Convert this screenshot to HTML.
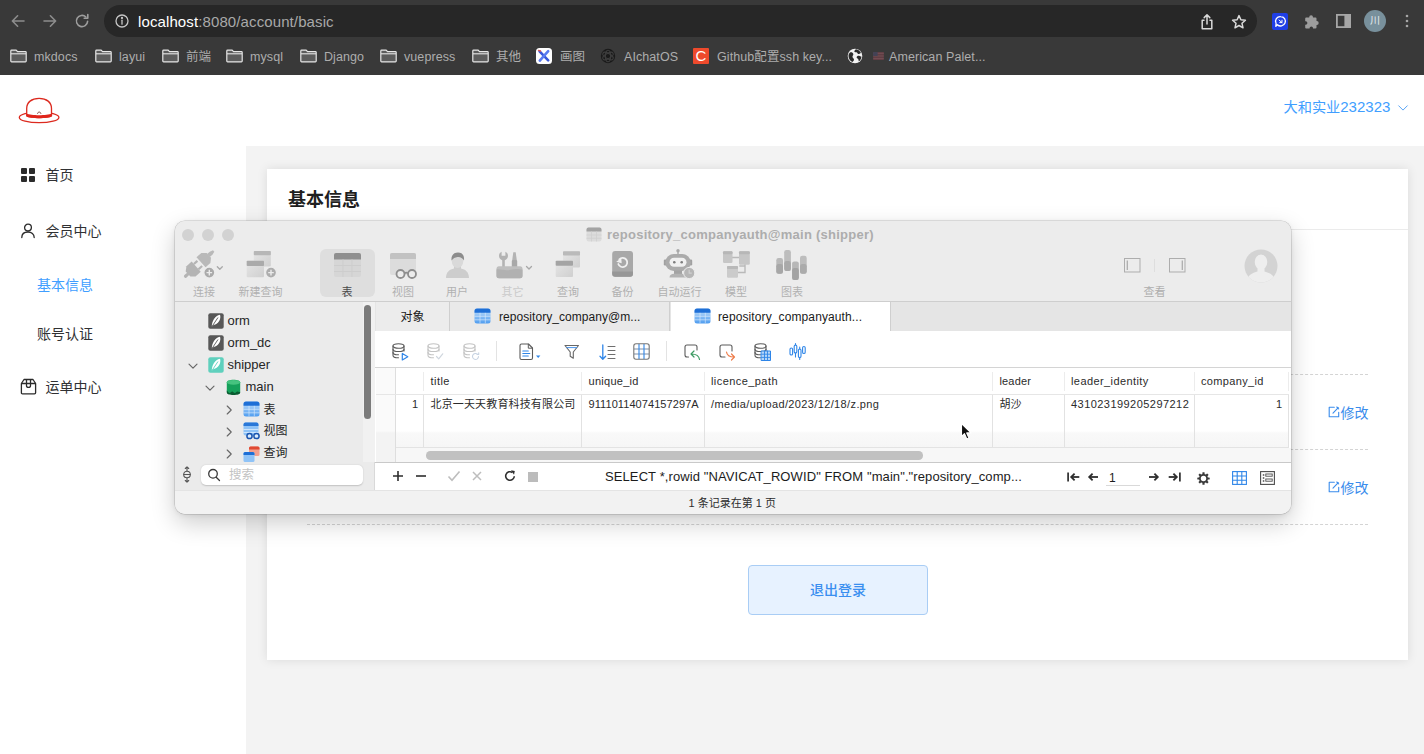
<!DOCTYPE html>
<html lang="zh-CN">
<head>
<meta charset="utf-8">
<title>基本信息</title>
<style>
*{box-sizing:border-box;margin:0;padding:0}
html,body{width:1424px;height:754px;overflow:hidden;background:#fff}
body{position:relative;font-family:"Liberation Sans","Noto Sans CJK SC",sans-serif;color:#303133}
.a{position:absolute;white-space:nowrap}
svg{position:absolute;overflow:visible}
/* ---------- browser chrome ---------- */
#chrome{left:0;top:0;width:1424px;height:74.5px;background:#393939}
#chrome .pill{left:104px;top:5px;width:1153px;height:32px;border-radius:16px;background:#272727}
#chrome .url{left:138px;top:11.5px;height:20px;line-height:20px;font-size:15px;color:#a9a9a9;letter-spacing:.11px}
#chrome .url b{color:#fff;font-weight:400}
.bm{top:47.5px;height:18px;line-height:18px;font-size:12.5px;color:#adadad;letter-spacing:.08px}
/* ---------- page ---------- */
#gray{left:246px;top:146px;width:1178px;height:608px;background:#f3f3f3}
#card{left:267px;top:169px;width:1141px;height:491px;background:#fff;box-shadow:0 0 10px rgba(0,0,0,.1)}
.menu{font-size:14px;height:20px;line-height:20px;color:#303133}
.blue{color:#409eff}
.dash{height:0;border-top:1px dashed #d4d4d4}
/* ---------- navicat ---------- */
#win{left:174.5px;top:221px;width:1116px;height:293px;border-radius:10px;background:#ececec;
 box-shadow:0 0 0 .5px rgba(0,0,0,.2),0 9px 24px rgba(0,0,0,.2),0 1px 5px rgba(0,0,0,.08);overflow:hidden}
#win .a{color:#b1b1b1}
.tl{width:12px;height:12px;border-radius:50%;background:#d2d2d2;top:8px}
.tbl{font-size:11px;height:14px;line-height:14px;top:63px;color:#b4b4b4}
.tree{font-size:13px;height:18px;line-height:18px;color:#262626 !important}
.gh{font-size:11px;height:14px;line-height:14px;color:#2b2b2b !important;top:153.5px}
.gc{font-size:11px;height:14px;line-height:14px;color:#2b2b2b !important;top:176.5px}
.vl{width:1px;background:#e2e2e2}
</style>
</head>
<body>
<!-- ================= BROWSER CHROME ================= -->
<div id="chrome" class="a">
  <div class="pill a"></div>
  <!-- back / forward / reload -->
  <svg style="left:10px;top:13px" width="16" height="16" viewBox="0 0 16 16" fill="none" stroke="#8d8d8d" stroke-width="1.6" stroke-linecap="round" stroke-linejoin="round"><path d="M14 8H2.6M7.6 2.8 2.4 8l5.2 5.2"/></svg>
  <svg style="left:42px;top:13px" width="16" height="16" viewBox="0 0 16 16" fill="none" stroke="#8d8d8d" stroke-width="1.6" stroke-linecap="round" stroke-linejoin="round"><path d="M2 8h11.4M8.4 2.8 13.6 8l-5.2 5.2"/></svg>
  <svg style="left:74px;top:13px" width="16" height="16" viewBox="0 0 16 16" fill="none" stroke="#9d9d9d" stroke-width="1.6" stroke-linecap="round" stroke-linejoin="round"><path d="M13.6 8.4A5.6 5.6 0 1 1 11.9 4"/><path d="M13.8 1.6v3.6h-3.6" /></svg>
  <!-- info -->
  <svg style="left:115px;top:14px" width="14" height="14" viewBox="0 0 14 14" fill="none" stroke="#c6c6c6" stroke-width="1.3"><circle cx="7" cy="7" r="6"/><path d="M7 6.2v4" stroke-linecap="round"/><circle cx="7" cy="4" r=".5" fill="#c6c6c6"/></svg>
  <div class="url a" id="url"><b>localhost</b>:8080/account/basic</div>
  <!-- share -->
  <svg style="left:1199px;top:12.700px" width="16" height="18" viewBox="0 0 16 18" fill="none" stroke="#dadada" stroke-width="1.5" stroke-linecap="round" stroke-linejoin="round"><path d="M5 7.2H3.2v8.6h9.6V7.2H11"/><path d="M8 11V2M5.2 4.6 8 1.8l2.8 2.8"/></svg>
  <!-- star -->
  <svg style="left:1231px;top:13.700px" width="16" height="16" viewBox="0 0 16 16" fill="none" stroke="#dadada" stroke-width="1.5" stroke-linejoin="round"><path d="M8 1.6l1.9 4.2 4.5.5-3.4 3 1 4.5L8 11.5l-4 2.3 1-4.5-3.4-3 4.5-.5z"/></svg>
  <!-- extension (blue) -->
  <div class="a" style="left:1271.500px;top:13.300px;width:16.500px;height:16.500px;border-radius:2px;background:#1f3fe6"></div>
  <svg style="left:1273.500px;top:15.300px" width="13" height="13" viewBox="0 0 13 13" fill="none" stroke="#fff" stroke-width="1.300"><path d="M6.700 1.600a4.700 4.700 0 1 1-3.300 8.100L1.800 11.300l.3-2.800A4.700 4.700 0 0 1 6.700 1.600z" stroke-linejoin="round"/><path d="M5 5l3 2.600M8 5.200v2.400H5.800" stroke-width="1" stroke-linecap="round"/></svg>
  <!-- puzzle -->
  <svg style="left:1303px;top:13.500px" width="16" height="16" viewBox="0 0 16 16" fill="#9d9d9d"><path d="M6.2 3.2a1.9 1.9 0 0 1 3.8 0v.4h2.6c.5 0 .9.4.9.9v2.6h.3a1.9 1.9 0 0 1 0 3.8h-.3v2.7c0 .5-.4.9-.9.9H10v-.4a1.7 1.7 0 0 0-3.4 0v.4H3.1c-.5 0-.9-.4-.9-.9v-2.9h.5a1.7 1.7 0 0 0 0-3.4h-.5V4.500c0-.5.4-.9.9-.9h3.100z"/></svg>
  <!-- side panel -->
  <svg style="left:1336px;top:14px" width="15" height="14" viewBox="0 0 15 14"><rect x=".9" y=".9" width="13.2" height="12.200" fill="none" stroke="#a6a6a6" stroke-width="1.8"/><rect x="8.4" y="1" width="5.6" height="12" fill="#a6a6a6"/></svg>
  <!-- avatar -->
  <div class="a" style="left:1364px;top:10px;width:22px;height:22px;border-radius:50%;background:#78909c;color:#e9eef0;font-size:10px;line-height:22px;text-align:center;font-family:'Liberation Sans','Noto Sans CJK SC',sans-serif">川</div>
  <!-- menu dots -->
  <svg style="left:1405px;top:14px" width="4" height="14" viewBox="0 0 4 14" fill="#a6a6a6"><circle cx="2" cy="2" r="1.300"/><circle cx="2" cy="7" r="1.300"/><circle cx="2" cy="12" r="1.300"/></svg>
  <!-- bookmarks -->
  <svg style="left:10px;top:49px" width="17" height="14" viewBox="0 0 17 14"><path d="M1.6 1.100h4.600l1.300 1.500h7.900c.5 0 .8.300.8.800v8.700c0 .5-.3.800-.8.800H1.600c-.5 0-.8-.3-.8-.8V1.900c0-.5.300-.8.800-.8z" fill="#5c5c5c" stroke="#e6e6e6" stroke-width="1.200" stroke-linejoin="round"/><path d="M1 4.800h15" stroke="#e6e6e6" stroke-width="1.100"/></svg>
  <div class="bm a" style="left:34px">mkdocs</div>
  <svg style="left:95px;top:49px" width="17" height="14" viewBox="0 0 17 14"><path d="M1.6 1.100h4.600l1.300 1.500h7.900c.5 0 .8.300.8.800v8.700c0 .5-.3.800-.8.800H1.600c-.5 0-.8-.3-.8-.8V1.900c0-.5.300-.8.800-.8z" fill="#5c5c5c" stroke="#e6e6e6" stroke-width="1.200" stroke-linejoin="round"/><path d="M1 4.800h15" stroke="#e6e6e6" stroke-width="1.100"/></svg>
  <div class="bm a" style="left:119px">layui</div>
  <svg style="left:162px;top:49px" width="17" height="14" viewBox="0 0 17 14"><path d="M1.6 1.100h4.600l1.300 1.500h7.900c.5 0 .8.300.8.800v8.700c0 .5-.3.800-.8.800H1.600c-.5 0-.8-.3-.8-.8V1.900c0-.5.300-.8.800-.8z" fill="#5c5c5c" stroke="#e6e6e6" stroke-width="1.200" stroke-linejoin="round"/><path d="M1 4.800h15" stroke="#e6e6e6" stroke-width="1.100"/></svg>
  <div class="bm a" style="left:186px">前端</div>
  <svg style="left:226px;top:49px" width="17" height="14" viewBox="0 0 17 14"><path d="M1.6 1.100h4.600l1.300 1.500h7.900c.5 0 .8.300.8.800v8.700c0 .5-.3.800-.8.800H1.600c-.5 0-.8-.3-.8-.8V1.900c0-.5.300-.8.800-.8z" fill="#5c5c5c" stroke="#e6e6e6" stroke-width="1.200" stroke-linejoin="round"/><path d="M1 4.800h15" stroke="#e6e6e6" stroke-width="1.100"/></svg>
  <div class="bm a" style="left:250px">mysql</div>
  <svg style="left:300px;top:49px" width="17" height="14" viewBox="0 0 17 14"><path d="M1.6 1.100h4.600l1.300 1.500h7.900c.5 0 .8.300.8.800v8.700c0 .5-.3.800-.8.800H1.600c-.5 0-.8-.3-.8-.8V1.900c0-.5.300-.8.800-.8z" fill="#5c5c5c" stroke="#e6e6e6" stroke-width="1.200" stroke-linejoin="round"/><path d="M1 4.800h15" stroke="#e6e6e6" stroke-width="1.100"/></svg>
  <div class="bm a" style="left:324px">Django</div>
  <svg style="left:380px;top:49px" width="17" height="14" viewBox="0 0 17 14"><path d="M1.6 1.100h4.600l1.300 1.500h7.900c.5 0 .8.300.8.800v8.700c0 .5-.3.800-.8.800H1.600c-.5 0-.8-.3-.8-.8V1.900c0-.5.300-.8.800-.8z" fill="#5c5c5c" stroke="#e6e6e6" stroke-width="1.200" stroke-linejoin="round"/><path d="M1 4.800h15" stroke="#e6e6e6" stroke-width="1.100"/></svg>
  <div class="bm a" style="left:404px">vuepress</div>
  <svg style="left:472px;top:49px" width="17" height="14" viewBox="0 0 17 14"><path d="M1.6 1.100h4.600l1.300 1.500h7.900c.5 0 .8.300.8.800v8.700c0 .5-.3.800-.8.800H1.600c-.5 0-.8-.3-.8-.8V1.900c0-.5.300-.8.800-.8z" fill="#5c5c5c" stroke="#e6e6e6" stroke-width="1.200" stroke-linejoin="round"/><path d="M1 4.800h15" stroke="#e6e6e6" stroke-width="1.100"/></svg>
  <div class="bm a" style="left:496px">其他</div>
  <div class="a" style="left:536px;top:48px;width:16px;height:16px;border-radius:3.5px;background:#fff"></div>
  <svg style="left:536px;top:48px" width="16" height="16" viewBox="0 0 16 16" fill="none" stroke-linecap="round"><path d="M3.6 3.400l8.600 9" stroke="#3a57d9" stroke-width="2.600"/><path d="M12.200 3.200 3.800 12.600" stroke="#5b7bf0" stroke-width="2.600"/><path d="M2.500 2.400l2 .6" stroke="#e05a5a" stroke-width="1.400"/></svg>
  <div class="bm a" style="left:560px">画图</div>
  <svg style="left:600px;top:48px" width="16" height="16" viewBox="0 0 16 16" fill="none" stroke="#0c0c0c" stroke-width="1.300"><circle cx="8" cy="8" r="7.200" fill="#1a1a1a" stroke="none"/><g stroke="#3d3d3d" stroke-width="1.100"><ellipse cx="8" cy="8" rx="2.600" ry="5.800"/><ellipse cx="8" cy="8" rx="2.600" ry="5.800" transform="rotate(60 8 8)"/><ellipse cx="8" cy="8" rx="2.600" ry="5.800" transform="rotate(120 8 8)"/></g></svg>
  <div class="bm a" style="left:624px">AIchatOS</div>
  <div class="a" style="left:693px;top:48px;width:16px;height:16px;border-radius:1px;background:#ee4a2c;color:#fff;font-weight:400;font-size:15px;line-height:16.500px;text-align:center">C</div>
  <div class="bm a" style="left:717px">Github配置ssh key...</div>
  <svg style="left:847px;top:48px" width="16" height="16" viewBox="0 0 16 16"><circle cx="8" cy="8" r="7.300" fill="#f2f2f2"/><path d="M3 4.500c1.500-.5 3 .2 3.300 1.500.3 1.300-1 1.700-.8 2.900.2 1.200 1.600 1.300 1.500 2.800-.1 1-.9 1.800-1.600 2.300A7 7 0 0 1 1.500 8c0-1.300.5-2.600 1.500-3.500zM9 1.200c2.300.3 4.200 1.800 5 3.800-1 .3-1.600 1.200-2.600 1-1-.2-.8-1.300-1.800-1.700-1-.4-1.700.2-2.200-.6C7 3 8 1.700 9 1.200zM14.400 8.500c0 2-1 3.800-2.500 4.900-.4-.8-.2-1.600-.8-2.400-.6-.8-1.500-.7-1.500-1.700s1.200-1.700 2.400-1.600c1 .1 1.600.7 2.400.8z" fill="#2b2b2b"/></svg>
  <svg style="left:873px;top:52px" width="11" height="8" viewBox="0 0 12 9" opacity=".75"><rect width="12" height="9" fill="#6d3f47"/><path d="M0 1.500h12M0 4.500h12M0 7.500h12" stroke="#8d5a62" stroke-width="1"/><rect width="5" height="4.500" fill="#47465f"/></svg>
  <div class="bm a" style="left:889px">American Palet...</div>
</div>

<!-- ================= PAGE ================= -->
<div id="gray" class="a"></div>
<div id="card" class="a"></div>
<!-- logo -->
<svg style="left:18px;top:96px" width="44" height="29" viewBox="0 0 44 29" fill="none" stroke="#dc2a1f" stroke-width="1.300" stroke-linejoin="round">
  <ellipse cx="21.100" cy="21.400" rx="19.800" ry="5.300" fill="#fff"/>
  <path d="M8.700 20V12.500C8.700 6.300 13.500 2.400 21.100 2.400S33.500 6.300 33.500 12.500V20c-4 2.200-20.800 2.200-24.800 0z" fill="#fff"/>
  <path d="M8.700 17.600c4 2.200 20.800 2.200 24.800 0v2.900c-4 2.300-20.800 2.300-24.800 0z" fill="#e0261c" stroke="none"/>
  <path d="M19.500 17.800c.2-2.300 3.200-2.300 3.400 0" stroke="#7a3a30" stroke-width=".9"/>
</svg>
<!-- user -->
<div class="a blue" id="user" style="left:1283.500px;top:97px;height:20px;line-height:20px;font-size:14.200px"><span>大和实业</span><span style="font-size:15px">232323</span></div>
<svg style="left:1397.500px;top:104.500px" width="10" height="6" viewBox="0 0 10 6" fill="none" stroke="#5aa5f7" stroke-width="1" stroke-linecap="round" stroke-linejoin="round"><path d="M.7.800l4.300 4.300L9.300.800"/></svg>
<!-- sidebar -->
<svg style="left:21px;top:168px" width="14" height="14" viewBox="0 0 14 14" fill="#2b2b2b"><rect x="0" y="0" width="6" height="6" rx="1"/><rect x="8" y="0" width="6" height="6" rx="1"/><rect x="0" y="8" width="6" height="6" rx="1"/><rect x="8" y="8" width="6" height="6" rx="1"/></svg>
<div class="menu a" style="left:45.500px;top:165px">首页</div>
<svg style="left:21px;top:223px" width="14" height="16" viewBox="0 0 14 16" fill="none" stroke="#2b2b2b" stroke-width="1.300" stroke-linecap="round"><circle cx="7" cy="4.600" r="3.400"/><path d="M.8 14.600c0-3.600 2.700-5.600 6.200-5.600s6.200 2 6.200 5.600"/></svg>
<div class="menu a" style="left:45.500px;top:221px">会员中心</div>
<div class="menu a blue" style="left:37px;top:274.500px">基本信息</div>
<div class="menu a" style="left:37px;top:324px">账号认证</div>
<svg style="left:20px;top:378px" width="17" height="17" viewBox="0 0 17 17" fill="none" stroke="#2b2b2b" stroke-width="1.300" stroke-linejoin="round"><path d="M4 1.500h9l2.600 4v9.300c0 .7-.4 1.100-1.100 1.100H2.500c-.7 0-1.100-.4-1.100-1.100V5.500z"/><path d="M6.500 1.500v6.200c0 1.100.8 1.700 2 1.700s2-.6 2-1.700V1.500M1.600 5.500h14"/></svg>
<div class="menu a" style="left:45.500px;top:377px">运单中心</div>
<!-- card content -->
<div class="a" style="left:288px;top:187px;height:26px;line-height:26px;font-size:18px;font-weight:700;color:#1f1f1f">基本信息</div>
<div class="a" style="left:267px;top:229px;width:1141px;height:1px;background:#ebebeb"></div>
<div class="dash a" style="left:307px;top:374px;width:1061px"></div>
<div class="dash a" style="left:307px;top:449px;width:1061px"></div>
<div class="dash a" style="left:307px;top:524px;width:1061px"></div>
<svg class="ed" style="left:1328px;top:406px" width="12" height="12" viewBox="0 0 12 12" fill="none" stroke="#3a8cec" stroke-width="1.100" stroke-linecap="round" stroke-linejoin="round"><path d="M6.300 1.300H1.200v9.500h9.500V6.200"/><path d="M5 7.200 10.300 1.600M8.800 1l1.900 1.800"/></svg>
<div class="menu a" style="color:#3a8cec;left:1340.500px;top:402.500px">修改</div>
<svg class="ed" style="left:1328px;top:481px" width="12" height="12" viewBox="0 0 12 12" fill="none" stroke="#3a8cec" stroke-width="1.100" stroke-linecap="round" stroke-linejoin="round"><path d="M6.300 1.300H1.200v9.500h9.500V6.200"/><path d="M5 7.200 10.300 1.600M8.800 1l1.900 1.800"/></svg>
<div class="menu a" style="color:#3a8cec;left:1340.500px;top:477.500px">修改</div>
<div class="a" style="left:748px;top:565px;width:180px;height:50px;border:1px solid #a9cdf5;border-radius:4px;background:#e7f2ff;color:#3a8ff0;font-size:14px;font-weight:500;line-height:48px;text-align:center">退出登录</div>

<!-- ================= NAVICAT WINDOW ================= -->
<div id="win" class="a"><div class="a" id="wo" style="left:-174.5px;top:-221px;width:1424px;height:754px">
  <!-- title / toolbar -->
  <div class="a" style="left:174px;top:221px;width:1118px;height:80.5px;background:#ececec;border-bottom:1px solid #d0d0d0"></div>
  <div class="tl a" style="left:182px;top:229px"></div><div class="tl a" style="left:202px;top:229px"></div><div class="tl a" style="left:222px;top:229px"></div>
  <svg style="left:586px;top:226.500px" width="16" height="15" viewBox="0 0 16 15"><rect x=".5" y=".5" width="15" height="14" rx="2" fill="#dcdcdc"/><path d="M.5 2.500a2 2 0 0 1 2-2h11a2 2 0 0 1 2 2V4.500H.5z" fill="#a3a3a3"/><path d="M.5 8h15M.5 11.300h15M5.500 4.500v10M10.500 4.500v10" stroke="#cfcfcf" stroke-width=".8"/></svg>
  <div class="a" id="wtitle" style="left:607px;top:225.500px;height:18px;line-height:18px;font-size:13px;font-weight:700;color:#adadad;letter-spacing:0.25px">repository_companyauth@main (shipper)</div>
  <div class="a" style="left:320px;top:249px;width:55px;height:48px;border-radius:6px;background:#dedede"></div>
  <div class="tbl a" style="left:341.500px;top:284.700px;color:#4a4a4a">表</div>
  <div class="tbl a" style="left:193.0px;top:284.700px">连接</div>
  <div class="tbl a" style="left:238.5px;top:284.700px">新建查询</div>
  <div class="tbl a" style="left:392.0px;top:284.700px">视图</div>
  <div class="tbl a" style="left:446.0px;top:284.700px">用户</div>
  <div class="tbl a" style="left:501.5px;top:284.700px;color:#cacaca">其它</div>
  <div class="tbl a" style="left:557.0px;top:284.700px">查询</div>
  <div class="tbl a" style="left:611.5px;top:284.700px">备份</div>
  <div class="tbl a" style="left:657.5px;top:284.700px">自动运行</div>
  <div class="tbl a" style="left:725.0px;top:284.700px">模型</div>
  <div class="tbl a" style="left:781.0px;top:284.700px">图表</div>
  <div class="tbl a" style="left:1143.500px;top:284.700px;color:#aeaeae">查看</div>

  <!-- connect -->
  <svg style="left:184px;top:250px" width="40" height="30" viewBox="0 0 40 30">
    <g transform="translate(14.800 14.300) rotate(-42)" fill="#b4b4b4"><rect x="-19.500" y="-1.600" width="6" height="3.200" rx="1.600"/><path d="M-14.500-3.500-10.500-6.800H-3.500V6.800H-10.500L-14.500 3.500z"/><rect x="-3.500" y="-4.600" width="4.800" height="2.200"/><rect x="-3.500" y="2.400" width="4.800" height="2.200"/><path d="M3-6.800h6.500L13.500-3.200V3.200L9.500 6.800H3z" fill="#b9b9b9"/><path d="M13 -2h3.500l3.500 1v2l-3.500 1H13z" fill="#b9b9b9"/></g>
    <circle cx="25.300" cy="22.600" r="5.500" fill="#aaaaaa" stroke="#ececec" stroke-width="1.300"/><path d="M25.300 19.800v5.600M22.500 22.600h5.600" stroke="#ececec" stroke-width="1.400"/>
    <path d="M33.300 16.800l2.500 2.500 2.500-2.500" fill="none" stroke="#a8a8a8" stroke-width="1.300" stroke-linecap="round" stroke-linejoin="round"/>
  </svg>
  <!-- new query -->
  <svg style="left:245px;top:250px" width="34" height="30" viewBox="0 0 34 30">
    <defs><linearGradient id="cg" x1="0" y1="0" x2="1" y2="1"><stop offset="0" stop-color="#e6e6e6"/><stop offset="1" stop-color="#cfcfcf"/></linearGradient></defs>
    <rect x="8.800" y="1" width="17" height="15.500" rx="1" fill="url(#cg)"/><rect x="8.800" y="1" width="17" height="4.300" rx=".8" fill="#b7b7b7"/>
    <rect x="1.700" y="10.800" width="17.300" height="16.500" rx="1" fill="url(#cg)"/><rect x="1.700" y="10.800" width="17.300" height="5.300" rx=".8" fill="#aaaaaa"/>
    <circle cx="26" cy="22.600" r="5.500" fill="#adadad" stroke="#ececec" stroke-width="1.300"/><path d="M26 19.800v5.600M23.200 22.600h5.600" stroke="#ececec" stroke-width="1.400"/>
  </svg>
  <!-- table (selected) -->
  <svg style="left:333px;top:252px" width="29" height="26" viewBox="0 0 29 26"><rect x="1" y="1" width="27" height="24" rx="2" fill="#d6d6d6"/><path d="M1 3a2 2 0 0 1 2-2h23a2 2 0 0 1 2 2v4.500H1z" fill="#8f8f8f"/><path d="M1 13.500h27M1 19.500h27M10 7.500v17.500M19 7.500v17.500" stroke="#cdcdcd" stroke-width="1"/></svg>
  <!-- view -->
  <svg style="left:389px;top:252px" width="30" height="28" viewBox="0 0 30 28"><rect x="1" y="1" width="26" height="22" rx="2" fill="#dcdcdc"/><path d="M1 3a2 2 0 0 1 2-2h22a2 2 0 0 1 2 2v4H1z" fill="#c2c2c2"/><circle cx="11.500" cy="22" r="4" fill="#ececec" stroke="#8e8e8e" stroke-width="1.800"/><circle cx="23" cy="22" r="4" fill="#ececec" stroke="#8e8e8e" stroke-width="1.800"/><path d="M15.300 21.500c1.200-1 2.700-1 3.900 0" fill="none" stroke="#8e8e8e" stroke-width="1.600"/></svg>
  <!-- user -->
  <svg style="left:445px;top:251px" width="25" height="28" viewBox="0 0 25 28"><path d="M1 27c0-6 3.500-8.500 8-9.500V15h7v2.500c4.500 1 8 3.500 8 9.500z" fill="#cdcdcd"/><ellipse cx="12.500" cy="10" rx="5.800" ry="7" fill="#d9d9d9"/><path d="M6.500 9.500C6 4 9 1.500 13 1.500s6.500 2.500 6 8c-1.500-2.500-4-4-6.500-3.500-2.500.3-4.500 1.500-6 3.500z" fill="#8c8c8c"/></svg>
  <!-- others -->
  <svg style="left:496px;top:251px" width="38" height="28" viewBox="0 0 38 28"><path d="M6.200 17V9.300C4.200 8.500 3 6.800 3 4.800 3 3 4 1.500 5.600.8v4h3.800v-4C11 1.500 12 3 12 4.800c0 2-1.200 3.700-3.200 4.500V17z" fill="#b3b3b3"/><path d="M17.300 1.200h2.400l1.100 8h-4.600z" fill="#b3b3b3"/><rect x="15.800" y="9" width="5.400" height="8" rx="1" fill="#a8a8a8"/><rect x=".5" y="15.300" width="26" height="12" rx="2.500" fill="#bebebe"/><path d="M.5 18.500c4-1 8 1.500 13 .5s9-1.500 13-.5v6.300a2.500 2.500 0 0 1-2.500 2.500H3a2.500 2.500 0 0 1-2.500-2.500z" fill="#b1b1b1"/><path d="M30.500 15.500l2.500 2.500 2.500-2.500" fill="none" stroke="#a8a8a8" stroke-width="1.300" stroke-linecap="round" stroke-linejoin="round"/></svg>
  <!-- query -->
  <svg style="left:554px;top:250px" width="28" height="28" viewBox="0 0 28 28"><rect x="9" y="1.300" width="17" height="16.300" rx="1" fill="url(#cg)"/><rect x="9" y="1.300" width="17" height="4.300" rx=".8" fill="#bababa"/><rect x="1.700" y="10.800" width="17.300" height="16.300" rx="1" fill="url(#cg)"/><rect x="1.700" y="10.800" width="17.300" height="5" rx=".8" fill="#a4a4a4"/></svg>
  <!-- backup -->
  <svg style="left:611px;top:250px" width="23" height="28" viewBox="0 0 23 28"><rect x="1.200" y="1" width="20.800" height="25.800" rx="3" fill="#a8a8a8"/><path d="M1.200 21.500h20.800v2.300a3 3 0 0 1-3 3H4.200a3 3 0 0 1-3-3z" fill="#979797"/><path d="M8.300 9.300A4.600 4.600 0 1 1 7.300 14" fill="none" stroke="#f0f0f0" stroke-width="1.800" stroke-linecap="round"/><path d="M5.200 11.800 10.300 8.300l.4 5z" fill="#f0f0f0"/></svg>
  <!-- automation -->
  <svg style="left:663px;top:248px" width="34" height="32" viewBox="0 0 34 32"><circle cx="15" cy="2.800" r="1.700" fill="#a8a8a8"/><rect x="14.300" y="3.500" width="1.400" height="3" fill="#a8a8a8"/><rect x=".8" y="11.500" width="3" height="6" rx="1.200" fill="#a0a0a0"/><rect x="26.200" y="11.500" width="3" height="6" rx="1.200" fill="#a0a0a0"/><rect x="2.300" y="6" width="25.400" height="17" rx="8.500" fill="#ababab"/><rect x="6.500" y="9.800" width="17" height="9" rx="4.500" fill="#f0f0f0"/><circle cx="11.300" cy="14.300" r="1.300" fill="#7d7d7d"/><circle cx="18.700" cy="14.300" r="1.300" fill="#7d7d7d"/><rect x="11" y="22.500" width="8" height="3.500" fill="#a3a3a3"/><path d="M6.500 29.500c0-2.500 2-3.700 4.500-3.700h8c2.500 0 4.500 1.200 4.500 3.700z" fill="#b3b3b3"/><circle cx="26.200" cy="25" r="5.600" fill="#b6b6b6" stroke="#ececec" stroke-width="1"/><path d="M26.200 21.800v3.400h2.600" fill="none" stroke="#cfcfcf" stroke-width="1.200"/></svg>
  <!-- model -->
  <svg style="left:722px;top:250px" width="29" height="29" viewBox="0 0 29 29"><path d="M10 7.500h8M23 14v8.500h-7M17.300 16h5.700" fill="none" stroke="#b9b9b9" stroke-width="1.400"/><rect x="1" y="1.300" width="9.500" height="11.700" rx="1.300" fill="#c6c6c6"/><rect x="1" y="1.300" width="9.500" height="3" rx="1" fill="#b7b7b7"/><rect x="17" y="1.300" width="10.800" height="13.500" rx="1.300" fill="#c6c6c6"/><rect x="17" y="1.300" width="10.800" height="3" rx="1" fill="#b7b7b7"/><rect x="5" y="16" width="11" height="11.700" rx="1.300" fill="#cbcbcb"/><rect x="5" y="16" width="11" height="3" rx="1" fill="#b9b9b9"/></svg>
  <!-- chart -->
  <svg style="left:776px;top:249px" width="32" height="32" viewBox="0 0 32 32"><rect x=".3" y="9" width="6.700" height="15.800" rx="2.200" fill="#b9b9b9"/><rect x=".3" y="15" width="6.700" height="9.800" rx="2.200" fill="#a7a7a7"/><rect x="8.200" y="1" width="6.700" height="21" rx="2.200" fill="#bdbdbd"/><rect x="8.200" y="12" width="6.700" height="10" rx="2.200" fill="#a9a9a9"/><rect x="16.100" y="12.400" width="6.700" height="18.600" rx="2.200" fill="#b7b7b7"/><rect x="16.100" y="19" width="6.700" height="12" rx="2.200" fill="#a3a3a3"/><rect x="24" y="6.800" width="6.700" height="18" rx="2.200" fill="#bdbdbd"/><rect x="24" y="15" width="6.700" height="9.800" rx="2.200" fill="#ababab"/></svg>
  <!-- view toggles -->
  <svg style="left:1124px;top:258px" width="17" height="15" viewBox="0 0 17 15" fill="none" stroke="#adadad" stroke-width="1"><rect x=".5" y=".5" width="15.500" height="13.500" rx="0"/><path d="M3.300 2.500v9.500" stroke-width="1.300"/></svg>
  <div class="a" style="left:1154px;top:259px;width:1px;height:13px;background:#dedede"></div>
  <svg style="left:1169px;top:258px" width="17" height="15" viewBox="0 0 17 15" fill="none" stroke="#adadad" stroke-width="1"><rect x=".5" y=".5" width="15.500" height="13.500" rx="0"/><path d="M13.300 2.500v9.500" stroke-width="1.300"/></svg>
  <!-- avatar -->
  <svg style="left:1244px;top:248.500px" width="34" height="34" viewBox="0 0 34 34"><defs><clipPath id="avc"><circle cx="17" cy="17" r="16.500"/></clipPath></defs><circle cx="17" cy="17" r="16.500" fill="#d3d3d3"/><g clip-path="url(#avc)" fill="#eeeeee"><ellipse cx="17" cy="13" rx="6.300" ry="7.500"/><path d="M13.500 18h7v4.500c4.500 1.200 8.500 3 9.500 6.500v6H4v-6c1-3.500 5-5.300 9.500-6.500z"/></g></svg>

  <!-- sidebar -->
  <div class="a" style="left:174px;top:301px;width:201px;height:189px;background:#ebebeb;border-right:1px solid #d9d9d9"></div>
  <svg style="left:207.5px;top:313px" width="16" height="16" viewBox="0 0 16 16"><rect x=".3" y=".3" width="15.400" height="15.400" rx="2" fill="#585858"/><path d="M3.800 13.800C4 8 6.800 3 12 1.800c1.200 3.200-.6 8-4.800 9.700l-1.700.4z" fill="#fff"/><path d="M3.400 14.400 10 4.500" stroke="#585858" stroke-width=".9" fill="none"/></svg>
  <div class="tree a" style="left:227.500px;top:312px">orm</div>
  <svg style="left:207.5px;top:335px" width="16" height="16" viewBox="0 0 16 16"><rect x=".3" y=".3" width="15.400" height="15.400" rx="2" fill="#585858"/><path d="M3.800 13.800C4 8 6.800 3 12 1.800c1.200 3.200-.6 8-4.800 9.700l-1.700.4z" fill="#fff"/><path d="M3.400 14.400 10 4.500" stroke="#585858" stroke-width=".9" fill="none"/></svg>
  <div class="tree a" style="left:227.500px;top:334px">orm_dc</div>
  <svg style="left:187.5px;top:362.5px" width="10" height="7" viewBox="0 0 10 7" fill="none" stroke="#676767" stroke-width="1.150" stroke-linecap="round" stroke-linejoin="round"><path d="M1 1.200l4 4 4-4"/></svg><svg style="left:207.5px;top:357px" width="16" height="16" viewBox="0 0 16 16"><rect x=".3" y=".3" width="15.400" height="15.400" rx="2" fill="#5fd0bd"/><path d="M3.800 13.800C4 8 6.800 3 12 1.800c1.200 3.200-.6 8-4.800 9.700l-1.700.4z" fill="#fff"/><path d="M3.400 14.400 10 4.500" stroke="#5fd0bd" stroke-width=".9" fill="none"/></svg>
  <div class="tree a" style="left:227.500px;top:356px">shipper</div>
  <svg style="left:205px;top:384.5px" width="10" height="7" viewBox="0 0 10 7" fill="none" stroke="#676767" stroke-width="1.150" stroke-linecap="round" stroke-linejoin="round"><path d="M1 1.200l4 4 4-4"/></svg><svg style="left:226px;top:379px" width="15" height="16" viewBox="0 0 15 16"><path d="M.8 3.500C.8 1.800 3.800.8 7.500.8s6.700 1 6.700 2.700v9c0 1.700-3 2.700-6.700 2.700S.8 14.200.8 12.500z" fill="#16a05a"/><ellipse cx="7.500" cy="3.300" rx="6.700" ry="2.400" fill="#46c37f"/><path d="M.8 11.500c1.300.9 1.500 2.400 2.800 2.400s1.300-1.500 2.600-1.500 1.300 1.500 2.600 1.500 1.300-1.500 2.600-1.500 1.500 1.200 2.800.3v1c0 1.300-3 2.300-6.700 2.300S.8 15 .8 13.700z" fill="#0a5c31"/></svg>
  <div class="tree a" style="left:245.500px;top:378px">main</div>
  <svg style="left:226px;top:404.5px" width="7" height="10" viewBox="0 0 7 10" fill="none" stroke="#676767" stroke-width="1.150" stroke-linecap="round" stroke-linejoin="round"><path d="M1.200 1l4 4-4 4"/></svg><svg style="left:243px;top:401px" width="17" height="16" viewBox="0 0 17 16"><defs><linearGradient id="tg" x1="0" y1="0" x2="0" y2="1"><stop offset="0" stop-color="#c5e1fb"/><stop offset="1" stop-color="#4f9df0"/></linearGradient></defs><rect x=".5" y=".5" width="16" height="15" rx="2.500" fill="url(#tg)"/><path d="M.5 3a2.500 2.500 0 0 1 2.500-2.500h11A2.500 2.500 0 0 1 16.500 3v1.800H.5z" fill="#1e6fd6"/><path d="M.5 8.300h16M.5 11.800h16M6 4.800v10.500M11.300 4.800v10.500" stroke="#e9f3fd" stroke-width=".7" opacity=".8"/></svg>
  <div class="tree a" style="left:263.500px;top:400.500px;font-size:12px">表</div>
  <svg style="left:226px;top:426.5px" width="7" height="10" viewBox="0 0 7 10" fill="none" stroke="#676767" stroke-width="1.150" stroke-linecap="round" stroke-linejoin="round"><path d="M1.200 1l4 4-4 4"/></svg><svg style="left:243px;top:422px" width="17" height="18" viewBox="0 0 17 18"><rect x=".5" y=".5" width="15" height="13" rx="2" fill="#8fc3f7"/><path d="M.5 2.500a2 2 0 0 1 2-2h11a2 2 0 0 1 2 2V4H.5z" fill="#2a78d8"/><path d="M.5 7.500h15M.5 10.500h15" stroke="#e9f3fd" stroke-width=".7"/><circle cx="6.500" cy="14" r="2.600" fill="#dcecfb" stroke="#1a55b0" stroke-width="1.500"/><circle cx="13.500" cy="14" r="2.600" fill="#dcecfb" stroke="#1a55b0" stroke-width="1.500"/></svg>
  <div class="tree a" style="left:263.500px;top:422px;font-size:12px">视图</div>
  <svg style="left:226px;top:448.5px" width="7" height="10" viewBox="0 0 7 10" fill="none" stroke="#676767" stroke-width="1.150" stroke-linecap="round" stroke-linejoin="round"><path d="M1.200 1l4 4-4 4"/></svg><svg style="left:243px;top:446px" width="17" height="18" viewBox="0 0 17 18"><rect x="6" y=".5" width="10.500" height="9.500" rx="1.500" fill="#f4a08e"/><path d="M6 2A1.500 1.500 0 0 1 7.500.5h7.500A1.500 1.500 0 0 1 16.500 2v1.500H6z" fill="#e04a33"/><rect x=".5" y="6" width="11" height="10" rx="1.500" fill="#8fc3f7"/><path d="M.5 7.500A1.500 1.500 0 0 1 2 6h8a1.500 1.500 0 0 1 1.500 1.500V9H.5z" fill="#1e6fd6"/></svg>
  <div class="tree a" style="left:263.500px;top:444px;font-size:12px">查询</div>
  <div class="a" style="left:362.500px;top:301.500px;width:12px;height:160.500px;background:#f1f1f1"></div>
  <div class="a" style="left:364px;top:305px;width:7px;height:114px;border-radius:3.500px;background:#7b7b7b"></div>
  <div class="a" style="left:174px;top:462px;width:200px;height:28px;background:#ebebeb"></div>
  <div class="a" style="left:201px;top:465px;width:162px;height:19.500px;border-radius:5px;background:#fff;box-shadow:0 .5px 1.500px rgba(0,0,0,.18)"></div>
  <svg style="left:207px;top:468px" width="14" height="14" viewBox="0 0 14 14" fill="none" stroke="#3a3a3a" stroke-width="1.300" stroke-linecap="round"><circle cx="6" cy="5.800" r="4.300"/><path d="M9.200 9.200l3.300 3.300"/></svg>
  <div class="a" style="left:229px;top:466px;height:18px;line-height:18px;font-size:12.500px;color:#c3c3c3">搜索</div>
  <svg style="left:182px;top:466px" width="10" height="17" viewBox="0 0 10 17" fill="none" stroke="#555" stroke-width="1.100" stroke-linecap="round" stroke-linejoin="round"><circle cx="5" cy="8.500" r="3.300"/><path d="M1.800 8.500h6.400M5 1v4M5 12v4M3.300 2.500 5 .9l1.700 1.600M3.300 14.500 5 16.100l1.700-1.600"/></svg>

  <!-- tabs -->
  <div class="a" style="left:375px;top:301px;width:917px;height:30px;background:#e5e5e5"></div>
  <div class="a" style="left:375.500px;top:301px;width:74px;height:30px;background:#ececec;border-right:1px solid #cfcfcf"></div>
  <div class="a" style="left:400.500px;top:307.500px;height:18px;line-height:18px;font-size:12px;color:#1a1a1a">对象</div>
  <div class="a" style="left:450px;top:301px;width:220px;height:30px;background:#e9e9e9;border-right:1px solid #cfcfcf"></div>
  <svg style="left:473.5px;top:308px" width="17" height="16" viewBox="0 0 17 16"><defs><linearGradient id="tg" x1="0" y1="0" x2="0" y2="1"><stop offset="0" stop-color="#c5e1fb"/><stop offset="1" stop-color="#4f9df0"/></linearGradient></defs><rect x=".5" y=".5" width="16" height="15" rx="2.500" fill="url(#tg)"/><path d="M.5 3a2.500 2.500 0 0 1 2.500-2.500h11A2.500 2.500 0 0 1 16.500 3v1.800H.5z" fill="#1e6fd6"/><path d="M.5 8.300h16M.5 11.800h16M6 4.800v10.500M11.300 4.800v10.500" stroke="#e9f3fd" stroke-width=".7" opacity=".8"/></svg>
  <div class="a" id="tab2" style="left:499px;top:307.500px;height:18px;line-height:18px;font-size:12px;color:#1a1a1a;letter-spacing:0.055px">repository_company@m...</div>
  <div class="a" style="left:670.500px;top:301px;width:220px;height:30px;background:#fff;border-right:1px solid #cfcfcf"></div>
  <svg style="left:694px;top:308px" width="17" height="16" viewBox="0 0 17 16"><defs><linearGradient id="tg" x1="0" y1="0" x2="0" y2="1"><stop offset="0" stop-color="#c5e1fb"/><stop offset="1" stop-color="#4f9df0"/></linearGradient></defs><rect x=".5" y=".5" width="16" height="15" rx="2.500" fill="url(#tg)"/><path d="M.5 3a2.500 2.500 0 0 1 2.500-2.500h11A2.500 2.500 0 0 1 16.500 3v1.800H.5z" fill="#1e6fd6"/><path d="M.5 8.300h16M.5 11.800h16M6 4.800v10.500M11.300 4.800v10.500" stroke="#e9f3fd" stroke-width=".7" opacity=".8"/></svg>
  <div class="a" id="tab3" style="left:718px;top:307.500px;height:18px;line-height:18px;font-size:12px;color:#1a1a1a;letter-spacing:0.11px">repository_companyauth...</div>

  <div class="a" style="left:174px;top:301px;width:1118px;height:1px;background:#cecece"></div>
  <!-- toolbar2 -->
  <div class="a" style="left:375px;top:331px;width:917px;height:37px;background:#fff;border-bottom:1.500px solid #d4d4d4"></div>
  <svg style="left:392px;top:342.5px" width="17" height="18" viewBox="0 0 17 18" fill="none" stroke="#5b5b5b" stroke-width="1.100" stroke-linecap="round" stroke-linejoin="round"><ellipse cx="6.500" cy="3" rx="5.500" ry="2.300"/><path d="M1 3v9.500c0 1.300 2.500 2.300 5.500 2.300"/><path d="M12 3v5"/><path d="M1 6.200c0 1.300 2.500 2.300 5.500 2.300s5.500-1 5.500-2.300M1 9.400c0 1.300 2.500 2.300 5.500 2.300"/><path d="M10.300 10.500v6.500l5.500-3.250z" stroke="#2f86e8" stroke-width="1.200"/></svg>
  <svg style="left:427px;top:342.5px" width="17" height="18" viewBox="0 0 17 18" fill="none" stroke="#c4c4c4" stroke-width="1.100" stroke-linecap="round" stroke-linejoin="round"><ellipse cx="6.500" cy="3" rx="5.500" ry="2.300"/><path d="M1 3v9.500c0 1.300 2.500 2.300 5.500 2.300"/><path d="M12 3v5"/><path d="M1 6.200c0 1.300 2.500 2.300 5.500 2.300s5.500-1 5.500-2.300M1 9.400c0 1.300 2.500 2.300 5.500 2.300"/><path d="M9.500 13.500l2.200 2.300 4-5" stroke="#cfd6de" stroke-width="1.200"/></svg>
  <svg style="left:462.5px;top:342.5px" width="17" height="18" viewBox="0 0 17 18" fill="none" stroke="#c4c4c4" stroke-width="1.100" stroke-linecap="round" stroke-linejoin="round"><ellipse cx="6.500" cy="3" rx="5.500" ry="2.300"/><path d="M1 3v9.500c0 1.300 2.500 2.300 5.500 2.300"/><path d="M12 3v5"/><path d="M1 6.200c0 1.300 2.500 2.300 5.500 2.300s5.500-1 5.500-2.300M1 9.400c0 1.300 2.500 2.300 5.500 2.300"/><path d="M15.500 13.500a3 3 0 1 1-1-2.300M15.700 9.800v1.700H14" stroke="#c7d3e2" stroke-width="1.100"/></svg>
  <div class="a" style="left:495.500px;top:341px;width:1px;height:20px;background:#e3e3e3"></div>
  <svg style="left:518.500px;top:342.500px" width="24" height="18" viewBox="0 0 24 18" fill="none" stroke-linecap="round" stroke-linejoin="round"><path d="M2.500 1h7l4 4v10c0 1-.5 1.500-1.500 1.500h-9.500c-1 0-1.500-.5-1.500-1.500V2.500C1 1.500 1.500 1 2.500 1z" stroke="#5b5b5b" stroke-width="1.100"/><path d="M9.300 1.200v4h4" stroke="#5b5b5b" stroke-width="1"/><path d="M3.800 8h5.500M3.800 10.500h7M3.800 13h5.500" stroke="#2f86e8" stroke-width="1.100"/><path d="M17 12.500h4.400l-2.200 2.600z" fill="#2f86e8"/></svg>
  <svg style="left:563.500px;top:344px" width="16" height="16" viewBox="0 0 16 16" fill="none" stroke-linecap="round" stroke-linejoin="round"><path d="M1 1.500h13.500L9.300 8v6.300L6.200 12.300V8z" stroke="#666" stroke-width="1.100"/><path d="M2.800 3.600h10" stroke="#4a96ee" stroke-width="1"/></svg>
  <svg style="left:598.500px;top:343.500px" width="17" height="17" viewBox="0 0 17 17" fill="none" stroke-linecap="round" stroke-linejoin="round"><path d="M3.800 1v14M1 12.300l2.800 3 2.800-3" stroke="#2f86e8" stroke-width="1.300"/><path d="M9 2.500h7M9 6.500h7M9 10.500h7M9 14.500h7" stroke="#6e6e6e" stroke-width="1"/></svg>
  <svg style="left:633px;top:343px" width="17" height="17" viewBox="0 0 17 17" fill="none"><path d="M1 6h15M1 11h15" stroke="#7d8fa8" stroke-width="1"/><path d="M6 1v15M11 1v15" stroke="#2f86e8" stroke-width="1.100"/><rect x=".8" y=".8" width="15.400" height="15.400" rx="2.200" stroke="#757575" stroke-width="1.100"/></svg>
  <div class="a" style="left:665.500px;top:341px;width:1px;height:20px;background:#e3e3e3"></div>
  <svg style="left:684px;top:343.500px" width="17" height="17" viewBox="0 0 17 17" fill="none" stroke-linecap="round" stroke-linejoin="round"><path d="M13 6V3c0-1.200-.8-2-2-2H3C1.800 1 1 1.800 1 3v8c0 1.200.8 2 2 2h1.500" stroke="#5b5b5b" stroke-width="1.100"/><path d="M15.500 15.500c-.5-3.500-3-5.500-8-5.500M10 7 7 10l3 3" stroke="#3d9b62" stroke-width="1.200"/></svg>
  <svg style="left:718.500px;top:343.500px" width="17" height="17" viewBox="0 0 17 17" fill="none" stroke-linecap="round" stroke-linejoin="round"><path d="M13 7V3c0-1.200-.8-2-2-2H3C1.800 1 1 1.800 1 3v8c0 1.200.8 2 2 2h3" stroke="#5b5b5b" stroke-width="1.100"/><path d="M7.500 8c.5 3.500 3 5 7.500 5M12.500 10l3 3-3 3" stroke="#ee7d4b" stroke-width="1.200"/></svg>
  <svg style="left:753.5px;top:342.5px" width="17" height="18" viewBox="0 0 17 18" fill="none" stroke="#5b5b5b" stroke-width="1.100" stroke-linecap="round" stroke-linejoin="round"><ellipse cx="6.500" cy="3" rx="5.500" ry="2.300"/><path d="M1 3v9.500c0 1.300 2.500 2.300 5.500 2.300"/><path d="M12 3v5"/><path d="M1 6.200c0 1.300 2.500 2.300 5.500 2.300s5.500-1 5.500-2.300M1 9.400c0 1.300 2.500 2.300 5.500 2.300"/><rect x="7.500" y="8" width="9" height="9.500" fill="#fff" stroke="#2f86e8" stroke-width="1"/><path d="M7.500 11.200h9M7.500 14.400h9M10.500 8v9.500M13.500 8v9.500" stroke="#2f86e8" stroke-width=".9"/><rect x="7.500" y="8" width="9" height="9.500" fill="#2f86e8" opacity=".35" stroke="none"/></svg>
  <svg style="left:789px;top:343px" width="17" height="17" viewBox="0 0 17 17" fill="none" stroke="#2f86e8" stroke-width="1.100" stroke-linecap="round"><rect x="1" y="5" width="2.600" height="7" rx="1.300"/><rect x="5.200" y="2" width="2.600" height="8" rx="1.300"/><path d="M6.500 .5v1.500M6.500 10v4"/><rect x="9.400" y="6" width="2.600" height="8.500" rx="1.300"/><path d="M10.700 4v2M10.700 14.500v2"/><rect x="13.600" y="3.500" width="2.600" height="7" rx="1.300"/></svg>

  <!-- grid -->
  <div class="a" style="left:375px;top:368px;width:917px;height:94px;background:#fff"></div>
  <div class="a" style="left:375.500px;top:368px;width:20.500px;height:94px;background:linear-gradient(#fafafa 0,#fafafa 63px,#f3f3f3 65px,#f3f3f3 100%);border-right:1px solid #dedede"></div>
  <div class="a" style="left:375.500px;top:394px;width:913px;height:1px;background:#e6e6e6"></div>
  <div class="a" style="left:396px;top:395px;width:892px;height:52px;background:linear-gradient(#fff 0,#fff 36px,#f9f9f9 38px,#f6f6f6 52px)"></div>
  <div class="a" style="left:396px;top:447px;width:892.500px;height:1px;background:#e3e3e3"></div>
  <div class="a" style="left:396px;top:448px;width:896px;height:14px;background:#f7f7f7"></div>
  <div class="vl a" style="left:423.0px;top:372px;height:19px;background:#ececec"></div><div class="vl a" style="left:423.0px;top:395px;height:52px"></div>
  <div class="vl a" style="left:580.5px;top:372px;height:19px;background:#ececec"></div><div class="vl a" style="left:580.5px;top:395px;height:52px"></div>
  <div class="vl a" style="left:704.0px;top:372px;height:19px;background:#ececec"></div><div class="vl a" style="left:704.0px;top:395px;height:52px"></div>
  <div class="vl a" style="left:992.0px;top:372px;height:19px;background:#ececec"></div><div class="vl a" style="left:992.0px;top:395px;height:52px"></div>
  <div class="vl a" style="left:1063.5px;top:372px;height:19px;background:#ececec"></div><div class="vl a" style="left:1063.5px;top:395px;height:52px"></div>
  <div class="vl a" style="left:1194.0px;top:372px;height:19px;background:#ececec"></div><div class="vl a" style="left:1194.0px;top:395px;height:52px"></div>
  <div class="vl a" style="left:1287.5px;top:372px;height:19px;background:#ececec"></div><div class="vl a" style="left:1287.5px;top:395px;height:52px"></div>
  <div class="gh a" id="gh0" style="left:430.5px;top:374px;letter-spacing:.45px">title</div>
  <div class="gh a" id="gh1" style="left:588.5px;top:374px;letter-spacing:0.28px">unique_id</div>
  <div class="gh a" id="gh2" style="left:711px;top:374px;letter-spacing:0.43px">licence_path</div>
  <div class="gh a" id="gh3" style="left:999.5px;top:374px;letter-spacing:0.15px">leader</div>
  <div class="gh a" id="gh4" style="left:1071px;top:374px;letter-spacing:0.41px">leader_identity</div>
  <div class="gh a" id="gh5" style="left:1201px;top:374px;letter-spacing:0.34px">company_id</div>
  <div class="gc a" id="gc0" style="left:430.5px;top:397px;letter-spacing:0.15px">北京一天天教育科技有限公司</div>
  <div class="gc a" id="gc1" style="left:588.5px;top:397px;letter-spacing:0.075px">91110114074157297A</div>
  <div class="gc a" id="gc2" style="left:711px;top:397px;letter-spacing:0.37px">/media/upload/2023/12/18/z.png</div>
  <div class="gc a" id="gc3" style="left:999.5px;top:397px">胡沙</div>
  <div class="gc a" id="gc4" style="left:1071px;top:397px;letter-spacing:0.45px">431023199205297212</div>
  <div class="gc a" style="left:1270px;width:12px;text-align:right;top:397px">1</div>
  <div class="gc a" style="left:406px;width:12px;text-align:right;top:397px">1</div>
  <div class="a" style="left:425.500px;top:451px;width:497px;height:8.500px;border-radius:4.250px;background:#c1c1c1"></div>
  <svg style="left:960px;top:422px" width="12" height="19" viewBox="0 0 12 19"><path d="M1.500 1.500v13l3-2.800 2.300 5.300 2.200-1-2.300-5.100h4.300z" fill="#111" stroke="#fff" stroke-width="1.100" stroke-linejoin="round"/></svg>

  <!-- bottom bar -->
  <div class="a" style="left:375px;top:462px;width:917px;height:28px;background:#fff;border-top:1px solid #c9c9c9"></div>
  <svg style="left:392px;top:470px" width="12" height="12" viewBox="0 0 12 12" stroke="#2d2d2d" stroke-width="1.600"><path d="M6 1v10M1 6h10"/></svg>
  <svg style="left:415px;top:470px" width="12" height="12" viewBox="0 0 12 12" stroke="#2d2d2d" stroke-width="1.600"><path d="M1 6h10"/></svg>
  <svg style="left:447px;top:470px" width="14" height="12" viewBox="0 0 14 12" fill="none" stroke="#bdbdbd" stroke-width="1.600"><path d="M1.500 6.500l3.500 3.800L12.500 1.500"/></svg>
  <svg style="left:472px;top:471px" width="10" height="10" viewBox="0 0 10 10" fill="none" stroke="#bdbdbd" stroke-width="1.500"><path d="M1 1l8 8M9 1 1 9"/></svg>
  <svg style="left:504px;top:470px" width="12" height="12" viewBox="0 0 12 12" fill="none" stroke="#2d2d2d" stroke-width="1.600"><path d="M10.300 6.200A4.300 4.300 0 1 1 8.500 2.500"/><path d="M7 .3 10.800 1 10 4.800z" fill="#2d2d2d" stroke="none"/></svg>
  <div class="a" style="left:528px;top:471.500px;width:10px;height:10px;background:#bcbcbc"></div>
  <div class="a" id="sql" style="left:605px;top:468px;height:18px;line-height:18px;font-size:13px;color:#1c1c1c;letter-spacing:0.097px">SELECT *,rowid "NAVICAT_ROWID" FROM "main"."repository_comp...</div>
  <svg style="left:1066.5px;top:472px;" width="13" height="10" viewBox="0 0 13 10" fill="none" stroke="#2d2d2d" stroke-linejoin="miter"><path d="M1.100 .6v8.800" stroke-width="1.700"/><path d="M12.300 5H4.200" stroke-width="1.800"/><path d="M7.600 1.600 4.200 5l3.400 3.400" stroke-width="1.800"/></svg>
  <svg style="left:1087.0px;top:472px;" width="12" height="10" viewBox="0 0 12 10" fill="none" stroke="#2d2d2d" stroke-linejoin="miter"><path d="M11 5H2.200" stroke-width="1.800"/><path d="M5.600 1.600 2.200 5l3.400 3.400" stroke-width="1.800"/></svg>
  <div class="a" style="left:1106px;top:468px;width:34px;height:17.500px;background:#fff;border-bottom:1px solid #d9d9d9"></div>
  <div class="a" style="left:1109px;top:469.500px;height:16px;line-height:16px;font-size:12px;color:#1c1c1c">1</div>
  <svg style="left:1147.5px;top:472px;transform:scaleX(-1);" width="12" height="10" viewBox="0 0 12 10" fill="none" stroke="#2d2d2d" stroke-linejoin="miter"><path d="M11 5H2.200" stroke-width="1.800"/><path d="M5.600 1.600 2.200 5l3.400 3.400" stroke-width="1.800"/></svg>
  <svg style="left:1168.0px;top:472px;transform:scaleX(-1);" width="13" height="10" viewBox="0 0 13 10" fill="none" stroke="#2d2d2d" stroke-linejoin="miter"><path d="M1.100 .6v8.800" stroke-width="1.700"/><path d="M12.300 5H4.200" stroke-width="1.800"/><path d="M7.600 1.600 4.200 5l3.400 3.400" stroke-width="1.800"/></svg>
  <svg style="left:1196.500px;top:471.500px" width="13" height="13" viewBox="0 0 13 13"><g fill="#3a3a3a"><rect x="5.400" y=".3" width="2.200" height="12.400" rx=".5"/><rect x="5.400" y=".3" width="2.200" height="12.400" rx=".5" transform="rotate(45 6.500 6.500)"/><rect x="5.400" y=".3" width="2.200" height="12.400" rx=".5" transform="rotate(90 6.500 6.500)"/><rect x="5.400" y=".3" width="2.200" height="12.400" rx=".5" transform="rotate(135 6.500 6.500)"/><circle cx="6.500" cy="6.500" r="4.500"/></g><circle cx="6.500" cy="6.500" r="2.700" fill="#fff"/></svg>
  <svg style="left:1231.500px;top:471px" width="15" height="14" viewBox="0 0 15 14" fill="none" stroke="#2f86e8" stroke-width="1.100"><rect x=".6" y=".6" width="13.800" height="12.800"/><path d="M.6 5h13.800M.6 9.300h13.800M5.200 .6v12.800M9.800 .6v12.800"/></svg>
  <svg style="left:1260px;top:471px" width="15" height="14" viewBox="0 0 15 14" fill="none" stroke="#4c4c4c" stroke-width="1.100"><rect x=".6" y=".6" width="13.800" height="12.800"/><path d="M2.800 4h1.500M2.800 7h1.500M2.800 10h1.500" stroke-width="1.300"/><rect x="5.800" y="3" width="6.400" height="2.200" stroke-width=".9"/><rect x="5.800" y="8" width="6.400" height="2.200" stroke-width=".9"/></svg>

  <!-- status -->
  <div class="a" style="left:174px;top:490px;width:1118px;height:25px;background:#f2f2f2;border-top:1px solid #e4e4e4"></div>
  <div class="a" style="left:688.500px;top:495.500px;height:14px;line-height:14px;font-size:11px;color:#2c2c2c">1 条记录在第 1 页</div>
</div></div>
</body>
</html>
